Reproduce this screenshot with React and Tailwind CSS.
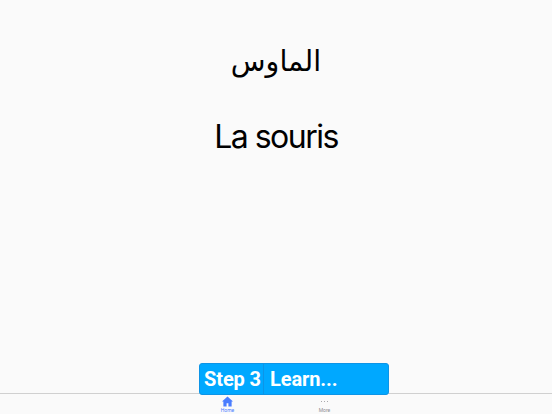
import React from "react";

export default function App() {
  return (
    <div className="w-[552px] h-[414px] bg-[#fafafa] flex flex-col overflow-hidden font-['Roboto',sans-serif]">
      <div className="flex-1 flex flex-col items-center min-h-0">
        <div className="mt-[41px] h-[42px] leading-[42px] text-[28.5px] text-black font-['DejaVu_Sans',sans-serif]" dir="rtl">الماوس</div>
        <div className="mt-[32px] h-[44px] leading-[44px] text-[32px] tracking-[-1.5px] text-black font-['Inter',sans-serif]">La souris</div>
        <div className="mt-auto mb-[-2px] self-start ml-[199px] relative z-10 w-[190px] h-[32px] rounded-[3px] bg-[#00a8ff] border border-[#0d94e6] flex items-stretch text-[20px] tracking-[-0.1px] leading-[30px] font-bold text-white whitespace-nowrap">
          <span className="w-[64px] pl-[4px] border-r border-[#0d94e6]">Step 3</span>
          <span className="pl-[6px]">Learn...</span>
        </div>
      </div>
      <div className="h-[21px] border-t border-[#d0d0d0] bg-[#fafafa] flex justify-center">
        <div className="w-[97px] flex flex-col items-center text-[#4a7dff]">
          <svg width="11" height="11" viewBox="0 0 24 24" fill="currentColor" className="mt-[2px]"><path d="M12 1 0 12h3v11h7v-7h4v7h7V12h3z" /></svg>
          <span className="text-[5px] leading-[6px]">Home</span>
        </div>
        <div className="w-[97px] flex flex-col items-center text-[#8e8e93]">
          <div className="h-[11px] mt-[2px] flex items-center gap-[1.5px]">
            <span className="w-[1.5px] h-[1.5px] rounded-full bg-[#8e8e93]"></span>
            <span className="w-[1.5px] h-[1.5px] rounded-full bg-[#8e8e93]"></span>
            <span className="w-[1.5px] h-[1.5px] rounded-full bg-[#8e8e93]"></span>
          </div>
          <span className="text-[5px] leading-[6px]">More</span>
        </div>
      </div>
    </div>
  );
}
